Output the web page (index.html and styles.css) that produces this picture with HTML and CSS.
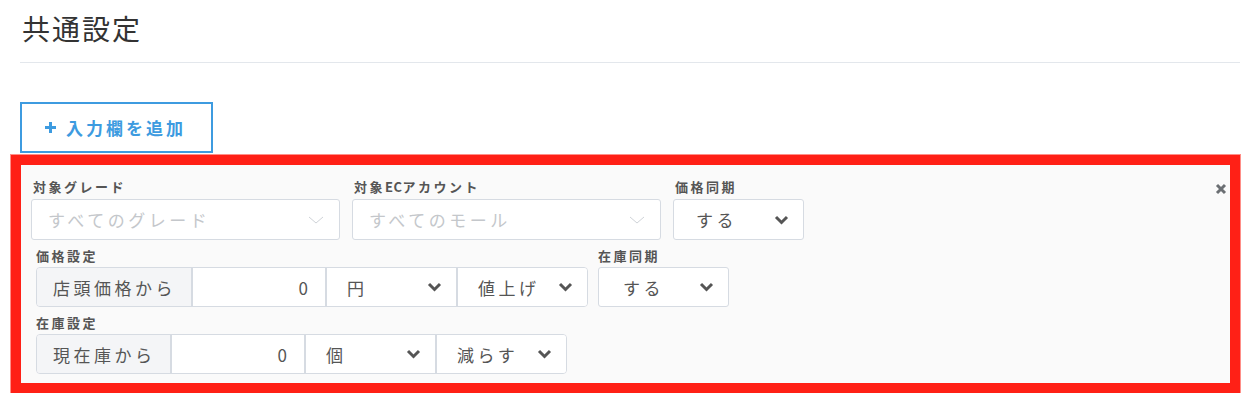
FILE: index.html
```html
<!DOCTYPE html>
<html lang="ja">
  <head>
    <meta charset="UTF-8" />
    <meta name="viewport" content="width=device-width, initial-scale=1.0" />
    <title>共通設定</title>
    <link rel="stylesheet" href="styles.css">
  </head>
  <body>
    <div class="content">
      <header class="section-head">
        <h1>共通設定</h1>
      </header>
      <button class="add-btn">
        <svg width="11" height="11" viewBox="0 0 11 11"><path d="M5.5 0v11M0 5.5h11" stroke="#3d9be0" stroke-width="3"/></svg>
        入力欄を追加
      </button>
    </div>

    <div class="highlight">
      <div class="panel">
        <span class="close">
          <svg width="12" height="12" viewBox="0 0 12 12"><path d="M2 2l8 8M10 2l-8 8" stroke="#6b6f73" stroke-width="3"/></svg>
        </span>

        <div class="row">
          <div class="field w-wide">
            <label>対象グレード</label>
            <div class="select placeholder">
              <span>すべてのグレード</span>
              <svg width="16" height="8" viewBox="0 0 16 8"><path d="M1 1l7 6 7-6" fill="none" stroke="#cfd3d8" stroke-width="1"/></svg>
            </div>
          </div>
          <div class="field w-wide">
            <label>対象<span class="latin">EC</span>アカウント</label>
            <div class="select placeholder">
              <span>すべてのモール</span>
              <svg width="16" height="8" viewBox="0 0 16 8"><path d="M1 1l7 6 7-6" fill="none" stroke="#cfd3d8" stroke-width="1"/></svg>
            </div>
          </div>
          <div class="field w-small">
            <label>価格同期</label>
            <div class="select">
              <span>する</span>
              <svg width="15" height="10" viewBox="0 0 15 10"><path d="M2 2l5.5 5.5L13 2" fill="none" stroke="#555" stroke-width="3"/></svg>
            </div>
          </div>
        </div>

        <div class="row indent">
          <div class="field">
            <label>価格設定</label>
            <div class="group">
              <span class="addon price">店頭価格から</span>
              <span class="num">0</span>
              <div class="select cell">
                <span>円</span>
                <svg width="15" height="10" viewBox="0 0 15 10"><path d="M2 2l5.5 5.5L13 2" fill="none" stroke="#555" stroke-width="3"/></svg>
              </div>
              <div class="select cell">
                <span>値上げ</span>
                <svg width="15" height="10" viewBox="0 0 15 10"><path d="M2 2l5.5 5.5L13 2" fill="none" stroke="#555" stroke-width="3"/></svg>
              </div>
            </div>
          </div>
          <div class="field w-small">
            <label>在庫同期</label>
            <div class="select sync">
              <span>する</span>
              <svg width="15" height="10" viewBox="0 0 15 10"><path d="M2 2l5.5 5.5L13 2" fill="none" stroke="#555" stroke-width="3"/></svg>
            </div>
          </div>
        </div>

        <div class="row indent">
          <div class="field">
            <label>在庫設定</label>
            <div class="group">
              <span class="addon stock">現在庫から</span>
              <span class="num">0</span>
              <div class="select cell">
                <span>個</span>
                <svg width="15" height="10" viewBox="0 0 15 10"><path d="M2 2l5.5 5.5L13 2" fill="none" stroke="#555" stroke-width="3"/></svg>
              </div>
              <div class="select cell">
                <span>減らす</span>
                <svg width="15" height="10" viewBox="0 0 15 10"><path d="M2 2l5.5 5.5L13 2" fill="none" stroke="#555" stroke-width="3"/></svg>
              </div>
            </div>
          </div>
        </div>
      </div>
    </div>
  </body>
</html>
```

FILE: styles.css
```css
body {
  font-family: "Noto Sans CJK JP", "Noto Sans", sans-serif;
  background-color: #fff;
  color: #555;
  margin: 0;
  padding: 0;
}
.content {
  padding: 0 14px 0 20px;
}
.section-head {
  padding: 8px 0 14px;
  border-bottom: 1px solid #e3e7ec;
}
h1 {
  margin: 0 0 0 2px;
  font-size: 28px;
  font-weight: normal;
  line-height: 40px;
  letter-spacing: 2px;
  color: #333;
}
.add-btn {
  display: flex;
  align-items: center;
  gap: 10px;
  margin: 39px 0 2px;
  width: 193px;
  height: 51px;
  padding: 0 0 0 23px;
  border: 2px solid #3d9be0;
  background-color: #fff;
  color: #3d9be0;
  font-family: inherit;
  font-size: 17px;
  font-weight: bold;
  letter-spacing: 3px;
  cursor: pointer;
}
.highlight {
  margin-left: 11px;
  width: 1229px;
  border: 10px solid #ff2016;
  box-shadow: 0 0 0 1px #ff8f88;
  box-sizing: border-box;
}
.panel {
  position: relative;
  background-color: #fafafa;
  padding: 13px 0 9px 10px;
}
.close {
  position: absolute;
  top: 18px;
  right: 3px;
  line-height: 0;
}
.row {
  display: flex;
  gap: 12px;
  margin-bottom: 7px;
}
.row:last-child {
  margin-bottom: 0;
}
.row.indent {
  padding-left: 5px;
  gap: 10px;
}
.field label {
  display: block;
  font-size: 13px;
  font-weight: bold;
  line-height: 18px;
  letter-spacing: 2.5px;
  margin: 0 0 3px 2px;
  color: #555;
}
.field label .latin {
  letter-spacing: 0.5px;
}
.row.indent .field label {
  margin: 0 0 2px 0;
}
.w-wide {
  width: 309px;
}
.w-small {
  width: 131px;
}
.select {
  display: flex;
  align-items: center;
  justify-content: space-between;
  box-sizing: border-box;
  height: 41px;
  padding: 0 14px 0 22px;
  border: 1px solid #d6dbe2;
  border-radius: 3px;
  background-color: #fff;
  font-size: 17px;
  letter-spacing: 3.5px;
  color: #555;
}
.select.sync {
  height: 40px;
  padding-left: 24px;
}
.select.placeholder {
  padding: 0 15px 0 16px;
  color: #c4c7cb;
}
.group {
  display: flex;
  height: 40px;
  border: 1px solid #d6dbe2;
  border-radius: 4px;
  overflow: hidden;
  box-sizing: border-box;
}
.addon {
  display: flex;
  align-items: center;
  padding-left: 16px;
  box-sizing: border-box;
  background-color: #f4f5f7;
  border-right: 2px solid #d6dbe2;
  font-size: 17px;
  letter-spacing: 3.5px;
  color: #555;
}
.addon.price {
  width: 156px;
}
.addon.stock {
  width: 135px;
}
.num {
  display: flex;
  align-items: center;
  justify-content: flex-end;
  width: 132px;
  padding-right: 17px;
  box-sizing: border-box;
  background-color: #fff;
  font-size: 17px;
  color: #555;
}
.select.cell {
  width: 131px;
  height: auto;
  border: none;
  border-left: 2px solid #d6dbe2;
  border-radius: 0;
  padding-left: 20px;
}
```
